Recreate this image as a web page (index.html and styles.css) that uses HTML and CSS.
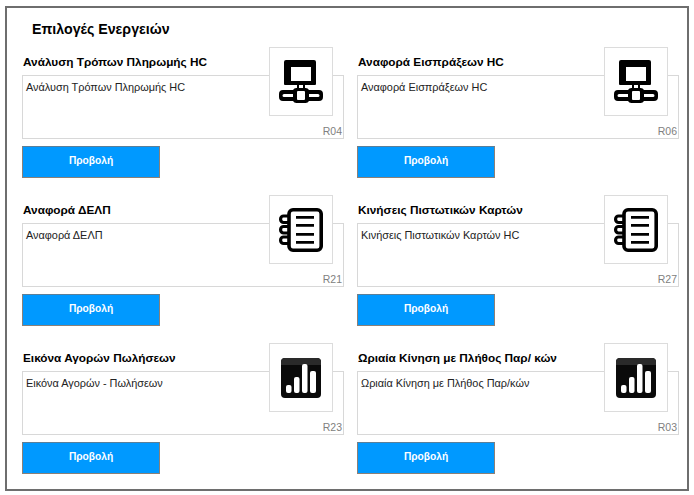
FILE: index.html
```html
<!DOCTYPE html>
<html lang="en">
  <head>
    <meta charset="UTF-8" />
    <title>Επιλογές Ενεργειών</title>
    <link rel="stylesheet" href="styles.css">
  </head>
  <body>
    <svg class="defs" width="0" height="0">
      <symbol id="iconNetwork" viewBox="0 0 44 44">
        <path fill-rule="evenodd" d="M7 0h28a2 2 0 0 1 2 2v22a1 1 0 0 1-1 1H26v4h-8v-4H6a1 1 0 0 1-1-1V2a2 2 0 0 1 2-2zM12 7v14h20V7z"/>
        <path fill="#fff" d="M20 25h4v3h-4z"/>
        <path fill-rule="evenodd" d="M18 28h8a4 4 0 0 1 4 2h10a4 4 0 0 1 4 4v3a4 4 0 0 1-4 4H30a4 4 0 0 1-4 2h-8a4 4 0 0 1-4-2H4a4 4 0 0 1-4-4v-3a4 4 0 0 1 4-4h10a4 4 0 0 1 4-2zM19 31a1 1 0 0 0-1 1v7a1 1 0 0 0 1 1h6a1 1 0 0 0 1-1v-7a1 1 0 0 0-1-1zM5 34a1.500 1.500 0 0 0 0 3h9v-3zM30 34v3h9a1.500 1.500 0 0 0 0-3z"/>
      </symbol>
      <symbol id="iconNotes" viewBox="0 0 44 44">
        <g fill="#fff" stroke="#000" stroke-width="3.200">
          <rect x="1.600" y="8" width="10" height="6.500" rx="3"/>
          <rect x="1.600" y="18.500" width="10" height="6.500" rx="3"/>
          <rect x="1.600" y="29" width="10" height="6.500" rx="3"/>
        </g>
        <rect x="10" y="1.800" width="32.200" height="40.400" rx="4" fill="#fff" stroke="#000" stroke-width="3.600"/>
        <path d="M17 8h18v2.800H17zM17 16h18v2.800H17zM17 25h18v2.800H17zM17 33h18v2.800H17z"/>
      </symbol>
      <symbol id="iconBars" viewBox="0 0 40 40">
        <rect width="40" height="40" rx="4" fill="#0a0a0a"/>
        <path fill="#2a2a2a" d="M4 0h32a4 4 0 0 1 4 4v3H0V4a4 4 0 0 1 4-4z"/>
        <rect fill="#fff" x="5" y="27" width="5.500" height="8" rx="2"/>
        <rect fill="#fff" x="13" y="19" width="5.500" height="16" rx="2"/>
        <rect fill="#fff" x="21" y="6" width="5.500" height="29" rx="2"/>
        <rect fill="#fff" x="29" y="13" width="6" height="22" rx="2"/>
      </symbol>
    </svg>

    <div class="frame">
      <h2 class="pageTitle">Επιλογές Ενεργειών</h2>
      <div class="cards">
        <div class="card">
          <h3>Ανάλυση Τρόπων Πληρωμής HC</h3>
          <div class="box">Ανάλυση Τρόπων Πληρωμής HC<span class="code">R04</span></div>
          <button class="viewBtn">Προβολή</button>
          <div class="tile"><svg class="iconNetwork"><use href="#iconNetwork"/></svg></div>
        </div>
        <div class="card">
          <h3>Αναφορά Εισπράξεων HC</h3>
          <div class="box">Αναφορά Εισπράξεων HC<span class="code">R06</span></div>
          <button class="viewBtn">Προβολή</button>
          <div class="tile"><svg class="iconNetwork"><use href="#iconNetwork"/></svg></div>
        </div>
        <div class="card">
          <h3>Αναφορά ΔΕΛΠ</h3>
          <div class="box">Αναφορά ΔΕΛΠ<span class="code">R21</span></div>
          <button class="viewBtn">Προβολή</button>
          <div class="tile"><svg class="iconNotes"><use href="#iconNotes"/></svg></div>
        </div>
        <div class="card">
          <h3>Κινήσεις Πιστωτικών Καρτών</h3>
          <div class="box">Κινήσεις Πιστωτικών Καρτών HC<span class="code">R27</span></div>
          <button class="viewBtn">Προβολή</button>
          <div class="tile"><svg class="iconNotes"><use href="#iconNotes"/></svg></div>
        </div>
        <div class="card">
          <h3>Εικόνα Αγορών Πωλήσεων</h3>
          <div class="box">Εικόνα Αγορών - Πωλήσεων<span class="code">R23</span></div>
          <button class="viewBtn">Προβολή</button>
          <div class="tile"><svg class="iconBars"><use href="#iconBars"/></svg></div>
        </div>
        <div class="card">
          <h3>Ωριαία Κίνηση με Πλήθος Παρ/ κών</h3>
          <div class="box">Ωριαία Κίνηση με Πλήθος Παρ/κών<span class="code">R03</span></div>
          <button class="viewBtn">Προβολή</button>
          <div class="tile"><svg class="iconBars"><use href="#iconBars"/></svg></div>
        </div>
      </div>
    </div>
  </body>
</html>
```

FILE: styles.css
```css
body {
  margin: 0;
  padding: 6px 5px 4px;
  background: #fff;
  font-family: "Liberation Sans", Arial, sans-serif;
  color: #000;
}

.defs {
  display: block;
  height: 0;
}

.frame {
  height: 485px;
  box-sizing: border-box;
  border: 2px solid #6e6e6e;
  padding: 0 7px 0 15px;
}

.pageTitle {
  margin: 0;
  padding-left: 10px;
  height: 46px;
  line-height: 42px;
  font-size: 14.2px;
  font-weight: bold;
}

.cards {
  display: grid;
  grid-template-columns: 322px 322px;
  column-gap: 13px;
  row-gap: 24px;
}

.card {
  position: relative;
}

.card h3 {
  margin: 0;
  padding-left: 1px;
  height: 21px;
  line-height: 17px;
  font-size: 11.8px;
  font-weight: bold;
  white-space: nowrap;
}

.box {
  position: relative;
  height: 64px;
  box-sizing: border-box;
  border: 1px solid #d8d8d8;
  padding: 4px 3px;
  font-size: 10.9px;
  line-height: 14px;
  color: #222;
}

.code {
  position: absolute;
  right: 1px;
  bottom: 0;
  font-size: 10.5px;
  line-height: 13px;
  color: #808080;
}

.viewBtn {
  display: block;
  width: 138px;
  height: 32px;
  margin-top: 7px;
  padding: 0 0 3px;
  border: 1px solid #8a8078;
  border-top-color: #5a7f99;
  background: #0099ff;
  color: #fff;
  font-family: inherit;
  font-size: 10.2px;
  font-weight: bold;
}

.tile {
  position: absolute;
  top: -7px;
  left: 247px;
  width: 64px;
  height: 69px;
  box-sizing: border-box;
  border: 1px solid #dcdcdc;
  background: #fff;
  display: flex;
  align-items: center;
  justify-content: center;
}

.iconNetwork,
.iconNotes {
  width: 44px;
  height: 44px;
}

.iconBars {
  width: 40px;
  height: 40px;
}
```
